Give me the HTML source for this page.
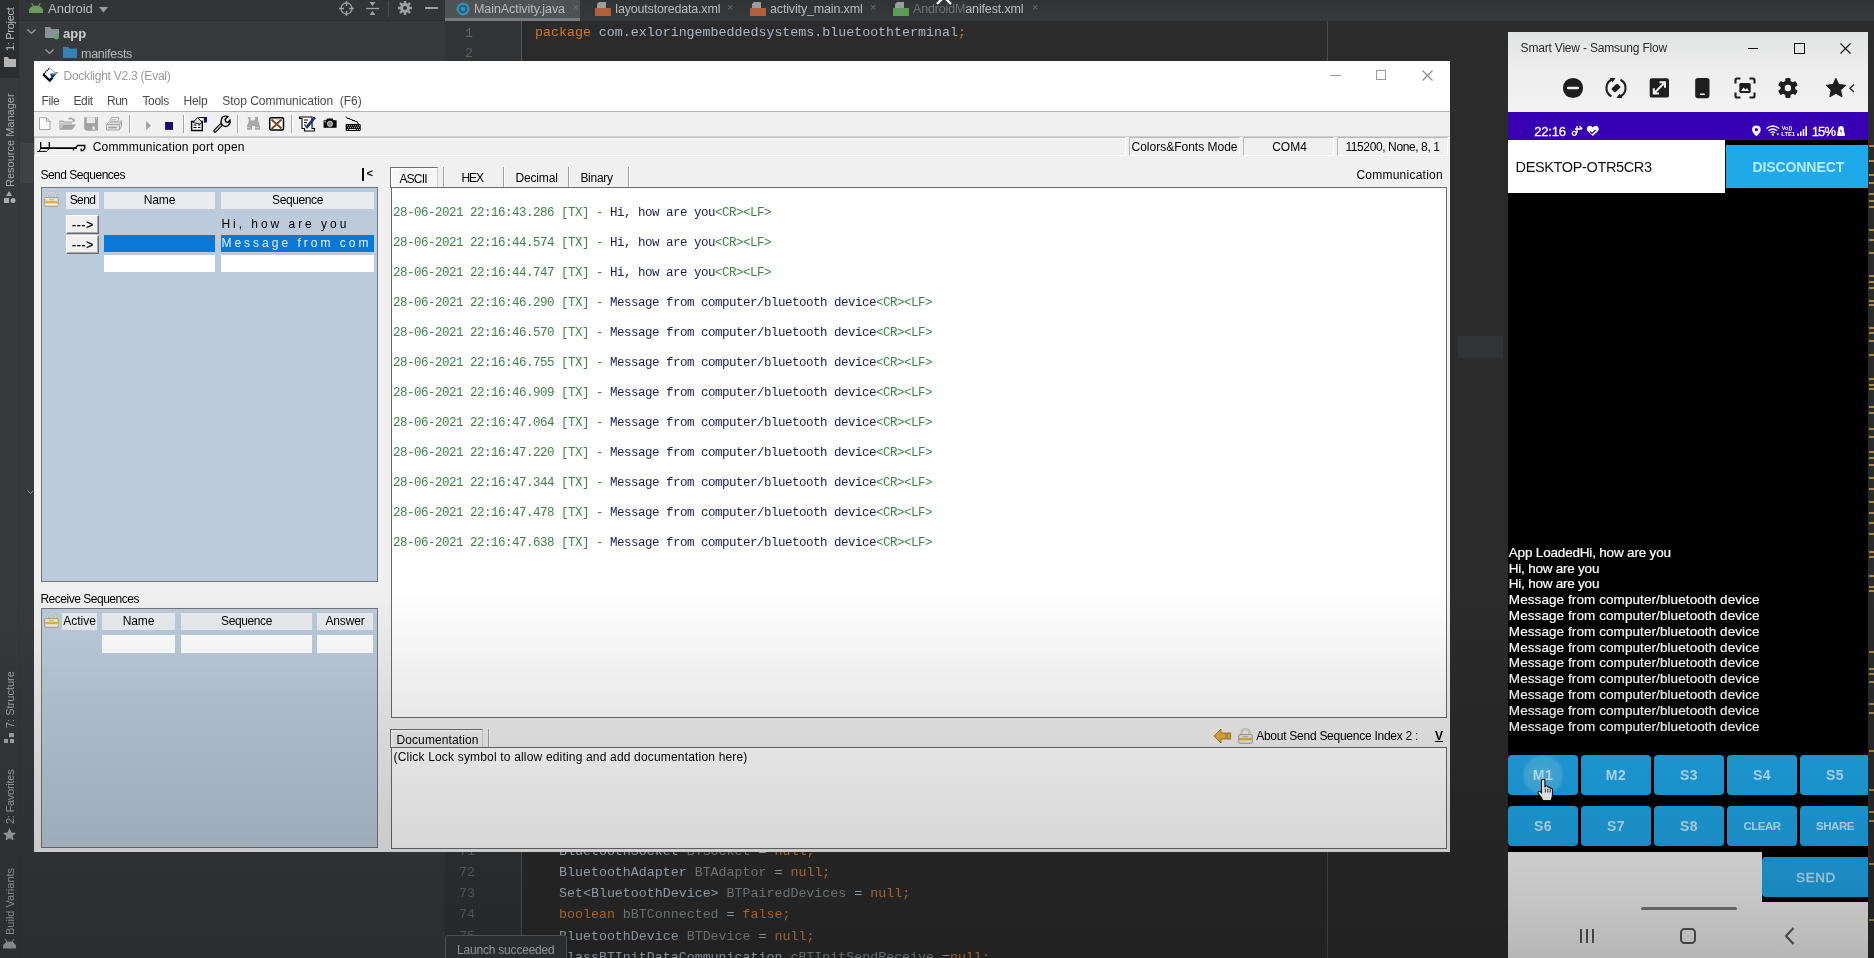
<!DOCTYPE html>
<html><head><meta charset="utf-8">
<style>
*{box-sizing:border-box;margin:0;padding:0}
html,body{width:1874px;height:958px;overflow:hidden;background:#2b2b2b;font-family:"Liberation Sans",sans-serif;}
.abs{position:absolute}
#root{position:relative;width:1874px;height:958px;overflow:hidden;background:#2b2b2b;filter:opacity(1)}
/* IDE */
#ide-strip{left:0;top:0;width:19px;height:958px;background:#37393b}
#ide-proj{left:19px;top:0;width:426px;height:958px;background:#38393c}
#ide-tabs{left:445px;top:0;width:1429px;height:21px;background:linear-gradient(#323335,#38393b)}
#ide-gutter{left:445px;top:21px;width:76px;height:937px;background:#313335}
.vt{position:absolute;transform-origin:0 0;transform:rotate(-90deg);white-space:nowrap;color:#bbbbbb;font-size:11px}
.code{font-family:"Liberation Mono",monospace;font-size:13.3px;color:#a9b7c6;white-space:pre}
.kw{color:#cc7832}
.fld{color:#84888b}
.ln{font-family:"Liberation Mono",monospace;font-size:13.3px;color:#606366}
/* Docklight */
#dock{left:34px;top:61px;width:1416px;height:791px;background:#f0f0f0;overflow:hidden}
.dl{font-size:12px;color:#000;white-space:nowrap}
.log{font-family:"Liberation Mono",monospace;font-size:12.5px;letter-spacing:-0.5px;white-space:pre;color:#3d8348;margin-top:1.4px}
.log b{font-weight:normal;color:#1c1c52}

.mn{color:#4a4a4a}
.sbox{top:137px;height:19px;font-size:12px;line-height:18px;text-align:center;white-space:nowrap;border-top:1px solid #b8b8b8;border-left:1px solid #b8b8b8;border-bottom:1px solid #fff;border-right:1px solid #fff;color:#000}
.hcell{height:17px;background:#e9ebef;font-size:12px;line-height:17px;text-align:center;color:#000;white-space:nowrap}
.sbtn{width:33px;height:18.5px;background:#f0f0f0;border:1px solid #fff;border-right-color:#6a6a6a;border-bottom-color:#6a6a6a;box-shadow:inset -1px -1px 0 #a8a8a8;font-size:12px;line-height:18px;text-align:center;color:#000;letter-spacing:0.7px;-webkit-text-stroke:0.3px #000;padding-left:1px}
.seq{font-size:12px;letter-spacing:2.97px;line-height:17px}
.tsep{top:167px;width:2px;height:20px;border-left:1px solid #a0a0a0;border-right:1px solid #fff}
/* phone */
#phone{left:1508px;top:32px;width:360px;height:926px;background:#000;overflow:hidden}
.pbtn{position:absolute;background:#1fa6e8;border-radius:4px;color:#bdeaff;font-weight:bold;font-size:14px;text-align:center;letter-spacing:0.5px}
.ptxt{position:absolute;left:0;color:#fff;font-size:13.5px;white-space:nowrap;-webkit-text-stroke:0.2px #fff}
</style></head><body>
<div id="root">
<!-- IDE BACKGROUND -->
<div class="abs" id="ide-strip"></div>
<div class="abs" id="ide-proj"></div>
<div class="abs" id="ide-tabs"></div>
<div class="abs" id="ide-gutter"></div>
<!--IDE-START-->
<!-- left strip -->
<div class="abs" style="left:0;top:0;width:19px;height:78px;background:#2b2d2e"></div>
<div class="vt" id="v1" style="left:3.5px;top:51px;letter-spacing:-0.3px">1: Project</div>
<svg class="abs" style="left:4px;top:56px" width="12" height="11" viewBox="0 0 12 11"><path d="M0 1h4l1 2h7v8H0z" fill="#b4b4b4"/></svg>
<div class="vt" id="v2" style="left:3.5px;top:187px;color:#a8a8a8">Resource Manager</div>
<svg class="abs" style="left:3px;top:191px" width="13" height="13" viewBox="0 0 13 13"><path d="M6 0l3 5H3z" fill="#aaa"/><rect x="1" y="7" width="5" height="5" fill="#aaa"/><circle cx="10" cy="9.5" r="2.5" fill="#aaa"/></svg>
<div class="abs" style="left:19px;top:0;width:1px;height:958px;background:#323537"></div><svg class="abs" style="left:27px;top:490px" width="7" height="5" viewBox="0 0 7 5"><path d="M.5.500l3 3 3-3" fill="none" stroke="#8a8c8e" stroke-width="1"/></svg>
<div class="vt" id="v3" style="left:3.5px;top:728px;color:#a8a8a8">7: Structure</div>
<svg class="abs" style="left:4px;top:733px" width="11" height="11" viewBox="0 0 11 11"><rect x="5" y="0" width="5" height="4" fill="#aaa"/><rect x="0" y="6" width="4" height="4" fill="#aaa"/><rect x="6" y="6" width="4" height="4" fill="#aaa"/></svg>
<div class="vt" id="v4" style="left:3.5px;top:824px;color:#a8a8a8;letter-spacing:-0.25px">2: Favorites</div>
<svg class="abs" style="left:3px;top:828px" width="13" height="13" viewBox="0 0 13 13"><path d="M6.5 0l2 4.5 4.5.5-3.4 3 1 4.6L6.500 10.200 2.400 12.600l1-4.600L0 5l4.500-.5z" fill="#aaa"/></svg>
<div class="vt" id="v5" style="left:3.5px;top:934.5px;color:#a8a8a8">Build Variants</div>
<svg class="abs" style="left:3px;top:939px" width="13" height="10" viewBox="0 0 13 10"><path d="M0 9c0-4 3-6 6.500-6S13 5 13 9zM2 0l2 3M11 0l-2 3" fill="#aaa" stroke="#aaa"/></svg>
<div class="abs" style="left:20px;top:143px;width:14px;height:40px;background:#3f4143"></div>
<!-- project header -->
<div class="abs" style="left:19px;top:0;width:426px;height:20px;background:#333437"></div><div class="abs" style="left:19px;top:20px;width:426px;height:1px;background:#2c2d2f"></div>
<svg class="abs" style="left:29px;top:3px" width="14" height="10" viewBox="0 0 14 10"><path d="M0 9.500c0-4 3-6.500 7-6.500s7 2.500 7 6.500zM2.500 0l2 3.200M11.500 0l-2 3.200" fill="#6a9c5f" stroke="#6a9c5f" stroke-width="1.200"/></svg>
<div class="abs" style="left:48px;top:1px;font-size:13px;color:#bbb">Android</div>
<svg class="abs" style="left:99px;top:7px" width="9" height="6" viewBox="0 0 9 6"><path d="M0 0h9L4.500 5.500z" fill="#9a9a9a"/></svg>
<svg class="abs" style="left:339px;top:1px" width="15" height="15" viewBox="0 0 15 15"><circle cx="7.500" cy="7.500" r="5.500" fill="none" stroke="#9fa1a3" stroke-width="1.300"/><path d="M7.500 0v5M7.500 10v5M0 7.500h5M10 7.500h5" stroke="#9fa1a3" stroke-width="1.300"/></svg>
<svg class="abs" style="left:366px;top:2px" width="13" height="13" viewBox="0 0 13 13"><path d="M0 6.500h13" stroke="#9fa1a3" stroke-width="1.300"/><path d="M3.500 0h6L6.500 4zM3.500 13h6L6.500 9z" fill="#9fa1a3"/></svg>
<div class="abs" style="left:388px;top:1px;width:1px;height:16px;background:#4b4d4f"></div>
<svg class="abs" style="left:398px;top:1px" width="14" height="14" viewBox="0 0 14 14"><circle cx="7" cy="7" r="3.600" fill="none" stroke="#9fa1a3" stroke-width="2.600"/><g stroke="#9fa1a3" stroke-width="2.400"><path d="M7 0v14M0 7h14M2 2l10 10M12 2L2 12"/></g><circle cx="7" cy="7" r="2" fill="#333437"/></svg>
<div class="abs" style="left:425px;top:7px;width:13px;height:2px;background:#9fa1a3"></div>
<!-- tree -->
<svg class="abs" style="left:27px;top:29px" width="9" height="6" viewBox="0 0 9 6"><path d="M.5.500l4 4 4-4" fill="none" stroke="#9fa1a3" stroke-width="1.200"/></svg>
<svg class="abs" style="left:45px;top:27px" width="15" height="13" viewBox="0 0 15 13"><path d="M0 0h5l1.500 2H14v9H0z" fill="#8c9196"/><circle cx="11.500" cy="10" r="2.500" fill="#59a869"/></svg>
<div class="abs" style="left:63px;top:26px;font-size:13px;color:#ccc;font-weight:bold">app</div>
<svg class="abs" style="left:45px;top:49px" width="9" height="6" viewBox="0 0 9 6"><path d="M.5.500l4 4 4-4" fill="none" stroke="#9fa1a3" stroke-width="1.200"/></svg>
<svg class="abs" style="left:63px;top:47px" width="15" height="12" viewBox="0 0 15 12"><path d="M0 0h5l1.500 1.500H14V11H0z" fill="#3682b2"/></svg>
<div class="abs" style="left:81px;top:47px;font-size:12.5px;color:#bbb;letter-spacing:-0.27px">manifests</div>
<!-- tabs -->
<div class="abs" style="left:445px;top:0;width:135px;height:20px;background:#4e5254"></div>
<div class="abs" style="left:445px;top:18px;width:135px;height:3px;background:#747a80"></div>
<svg class="abs" style="left:456px;top:2px" width="14" height="14" viewBox="0 0 14 14"><circle cx="7" cy="7" r="6.500" fill="#3a8db5"/><circle cx="7" cy="7" r="3.200" fill="none" stroke="#24566f" stroke-width="1.500"/></svg>
<div class="abs" style="left:474px;top:2px;font-size:12.5px;color:#bbb;letter-spacing:-0.07px">MainActivity.java</div>
<div class="abs" style="left:572.5px;top:1px;font-size:11px;color:#6e6e6e">×</div>
<svg class="abs" style="left:595px;top:2px" width="16" height="14" viewBox="0 0 16 14"><rect x="0" y="6" width="16" height="8" fill="#b0603a"/><path d="M4 0h7v6H2V2z" fill="#9a9da0"/></svg>
<div class="abs" style="left:615.3px;top:2px;font-size:12.5px;color:#bbb;letter-spacing:-0.18px">layoutstoredata.xml</div>
<div class="abs" style="left:727px;top:1px;font-size:11px;color:#6e6e6e">×</div>
<svg class="abs" style="left:750px;top:2px" width="16" height="14" viewBox="0 0 16 14"><rect x="0" y="6" width="16" height="8" fill="#b0603a"/><path d="M4 0h7v6H2V2z" fill="#9a9da0"/></svg>
<div class="abs" style="left:770px;top:2px;font-size:12.5px;color:#bbb;letter-spacing:-0.15px">activity_main.xml</div>
<div class="abs" style="left:870px;top:1px;font-size:11px;color:#6e6e6e">×</div>
<svg class="abs" style="left:893px;top:2px" width="16" height="14" viewBox="0 0 16 14"><rect x="0" y="6" width="16" height="8" fill="#5d9c57"/><path d="M4 0h7v6H2V2z" fill="#9a9da0"/></svg>
<div class="abs" style="left:913px;top:2px;font-size:12.5px;color:#bbb;letter-spacing:-0.15px"><span style="color:#6e7173">AndroidM</span>anifest.xml</div>
<div class="abs" style="left:1032px;top:1px;font-size:11px;color:#6e6e6e">×</div>
<svg class="abs" style="left:936px;top:-7px" width="16" height="12" viewBox="0 0 16 12"><path d="M1 11l7-7 7 7" fill="none" stroke="#fff" stroke-width="2.400"/></svg>
<!-- editor -->
<div class="abs" style="left:521px;top:21px;width:1px;height:937px;background:#555"></div>
<div class="abs" style="left:1327px;top:21px;width:1px;height:937px;background:#4a4a4a"></div>
<div class="abs" style="left:1458px;top:336px;width:45px;height:22px;background:#323334"></div>
<div class="abs ln" style="left:465px;top:25.5px">1</div>
<div class="abs ln" style="left:465px;top:46.2px">2</div>
<div class="abs code" style="left:535px;top:25px"><span class="kw">package</span> com.exloringembeddedsystems.bluetoothterminal<span class="kw">;</span></div>
<div class="abs ln" style="left:459px;top:843.8px">71</div>
<div class="abs code" style="left:559px;top:843.8px">BluetoothSocket <span class="fld">BTSocket</span> = <span class="kw">null;</span></div>
<div class="abs ln" style="left:459px;top:865px">72</div>
<div class="abs ln" style="left:459px;top:886.2px">73</div>
<div class="abs ln" style="left:459px;top:907.4px">74</div>
<div class="abs ln" style="left:459px;top:928.6px">75</div>
<div class="abs code" style="left:559px;top:865px">BluetoothAdapter <span class="fld">BTAdaptor</span> = <span class="kw">null;</span></div>
<div class="abs code" style="left:559px;top:886.2px">Set&lt;BluetoothDevice&gt; <span class="fld">BTPairedDevices</span> = <span class="kw">null;</span></div>
<div class="abs code" style="left:559px;top:907.4px"><span class="kw">boolean</span> <span class="fld">bBTConnected</span> = <span class="kw">false;</span></div>
<div class="abs code" style="left:559px;top:928.6px">BluetoothDevice <span class="fld">BTDevice</span> = <span class="kw">null;</span></div>
<div class="abs code" style="left:559px;top:949.8px">classBTInitDataCommunication <span class="fld">cBTInitSendReceive</span> =<span class="kw">null;</span></div>
<div class="abs" style="left:445px;top:935px;width:122px;height:26px;background:#35383a;border:1px solid #5e6163;border-radius:3px"></div>
<div class="abs" style="left:457px;top:943px;font-size:12px;color:#bbb;letter-spacing:-0.2px">Launch succeeded</div>
<!--IDE-END-->
<!-- DOCKLIGHT -->
<div class="abs" id="dock">
<!--DOCK-START-->
<div class="abs" style="left:-34px;top:-61px;width:1874px;height:958px">
<!-- title + menu -->
<div class="abs" style="left:34px;top:61px;width:1416px;height:50px;background:#fff"></div>
<svg class="abs" style="left:40.7px;top:64.7px" width="20" height="18" viewBox="40 64 20 18"><path d="M42.200 73.400L48.750 79.600 51.800 76.300" fill="none" stroke="#000" stroke-width="2.300" stroke-linejoin="miter"/><path d="M42.600 73L48.750 66.900" fill="none" stroke="#000" stroke-width="1.300" stroke-dasharray="1.400 .7"/><path d="M48.750 66.900L54.500 72" fill="none" stroke="#8a8a8a" stroke-width=".8"/><path d="M49 73.100L56.300 72.300 51 77.800z" fill="#1c6aa6"/><path d="M49.500 74.500l4.500-.5-2.500 2.600z" fill="#0c2c58"/><path d="M48.800 72.700L57.300 71.400" stroke="#9a9a9a" stroke-width=".9"/><path d="M54.500 71.900l2-.3" stroke="#c06820" stroke-width="1"/></svg>
<div class="abs dl" id="ttl" style="left:63.5px;top:69px;color:#9a9a9a;letter-spacing:-0.24px">Docklight V2.3 (Eval)</div>
<div class="abs" style="left:1330px;top:75px;width:11px;height:1px;background:#9a9a9a"></div>
<div class="abs" style="left:1376px;top:70px;width:10px;height:10px;border:1px solid #9a9a9a"></div>
<svg class="abs" style="left:1422px;top:70px" width="11" height="11" viewBox="0 0 11 11"><path d="M.5.500l10 10M10.500.500l-10 10" stroke="#8a8a8a" stroke-width="1.100"/></svg>
<div class="abs dl mn" style="left:41.5px;top:93.5px;letter-spacing:-0.4px">File</div>
<div class="abs dl mn" style="left:73.5px;top:93.5px;letter-spacing:-0.4px">Edit</div>
<div class="abs dl mn" style="left:107px;top:93.5px;letter-spacing:-0.5px">Run</div>
<div class="abs dl mn" style="left:142.4px;top:93.5px;letter-spacing:-0.3px">Tools</div>
<div class="abs dl mn" style="left:183.4px;top:93.5px;letter-spacing:-0.15px">Help</div>
<div class="abs dl mn" id="stopc" style="left:222.3px;top:93.5px;letter-spacing:-0.03px">Stop Communication&nbsp;&nbsp;(F6)</div>
<div class="abs" style="left:34px;top:111px;width:1416px;height:1px;background:#b4b4b4"></div>
<!-- toolbar -->
<div class="abs" style="left:34px;top:112px;width:1416px;height:24px;background:#f0f0f0"></div>
<svg class="abs" style="left:34px;top:112px" width="340" height="25" viewBox="34 112 340 25">
<!-- new -->
<path d="M39.500 117.800h7l3.500 3.500v8.200h-10.500z" fill="#fdfdfd" stroke="#a6a6a6" stroke-width="1"/><path d="M46.500 117.800v3.500h3.500" fill="none" stroke="#a6a6a6" stroke-width="1"/>
<!-- open -->
<path d="M60 129.700v-8.500h3l1 1h7v2.300" fill="none" stroke="#a6a6a6" stroke-width="1.200"/><path d="M60 129.700l3.500-5.200h12.500l-4 5.200z" fill="#a2a2a2"/><path d="M61 122.500h9v2h-6.500l-2.500 3.500z" fill="#c4c4c4"/><path d="M68 118.500q3.500-2.500 6 1l1-1.300v3.600h-3.400l1.200-1.300q-1.800-2.200-4-.8z" fill="#a6a6a6"/>
<!-- save -->
<path d="M84.200 117.300h13.800v13.300h-12.300l-1.500-1.500z" fill="#a2a2a2"/><rect x="86.700" y="117.300" width="8.300" height="5.800" fill="#e8e8e8"/><rect x="87.200" y="125.300" width="8" height="5.300" fill="#a2a2a2"/><rect x="92.500" y="126.300" width="2.200" height="3.600" fill="#ececec"/><rect x="96" y="118.200" width="1" height="1" fill="#e8e8e8"/>
<!-- print -->
<path d="M109.500 122l2-4.500h7.500l-1.500 4.500z" fill="#f4f4f4" stroke="#a6a6a6" stroke-width="1"/><path d="M111.500 119.500h5M111 121h5" stroke="#b8b8b8" stroke-width=".8"/><path d="M106.500 124.500l2.500-2.500h10.500l2-1.500v6l-2.500 3.500h-12.500z" fill="#e2e2e2" stroke="#a6a6a6" stroke-width="1"/><path d="M106.500 124.500h13v5.500M119.500 124.500l2-2.500" fill="none" stroke="#a6a6a6" stroke-width="1"/><path d="M108.500 127.500h8" stroke="#a0a0a0" stroke-width="1.600"/>
<!-- seps -->
<g stroke="#a8a8a8" stroke-width="1"><path d="M129.500 115v18M183.500 115v18M237.500 115v18M291.500 115v18"/></g>
<g stroke="#fff" stroke-width="1"><path d="M130.500 115v18M184.500 115v18M238.500 115v18M292.500 115v18"/></g>
<!-- play / stop -->
<path d="M146 121v9l5-4.500z" fill="#a4a4a4"/>
<rect x="165.100" y="122" width="7.900" height="7.900" fill="#1c0a72"/>
<!-- props -->
<path d="M191.600 121.500h10.700v9h-10.700z" fill="#fff" stroke="#000" stroke-width="1.400"/><path d="M193.500 125h3M198 125h2.500M193.500 127.500h3M198 127.500h2.500" stroke="#000" stroke-width="1.200"/><path d="M193 122.500l4.500-5 4.500 4.500-2 2.200z" fill="#d8d8d8" stroke="#000" stroke-width=".9"/><path d="M198.500 117.500h6v5" fill="none" stroke="#000" stroke-width="1.200"/><rect x="204" y="117" width="3" height="5.500" fill="#14146a"/>
<!-- wrench -->
<path d="M215 131l8-8" stroke="#000" stroke-width="3.400" stroke-linecap="round"/><path d="M215.300 130.700l7.700-7.700" stroke="#c8c8c8" stroke-width="1.400" stroke-linecap="round"/><path d="M222 117.500q2.500-2 6-1l-3 3 .8 2.200 2.200.8 2-2.500q.8 3.500-1.800 5.500t-5.500 0q-2.600-2.600-1.200-6z" fill="#e8e8e8" stroke="#000" stroke-width="1.300"/>
<!-- binoculars -->
<path d="M247.500 117h3v2.500l1 1h2.500l1-1V117h3v3l2 6v3.700h-5V126h-3v3.700h-5V126l2-6z" fill="#a8a8a8"/><path d="M246.500 127.500h3M255.500 127.500h3" stroke="#d0d0d0" stroke-width="1"/>
<!-- xbox -->
<rect x="269.700" y="117.700" width="13.800" height="12.400" rx="1.500" fill="#fafafa" stroke="#000" stroke-width="1.500"/><path d="M271.500 119.500l10 9M281.500 119.500l-10 9.500" stroke="#7a4424" stroke-width="1.800"/><path d="M276 119h5" stroke="#999" stroke-width="1"/>
<!-- notepad -->
<path d="M299.500 117h3l0 0h9.500v11.500h2.500v2.500h-10v-2.500h-2.500v-10h-2.500z" fill="#fafafa" stroke="#000" stroke-width="1.100"/><path d="M304 120h4M304 122.500h3M304 125h2" stroke="#000" stroke-width="1"/><path d="M305.500 127l8.500-10 1.300 1.200-8 10z" fill="#1a3a9a" stroke="#0a1a5a" stroke-width=".8"/><path d="M304.500 128.500l1-1.500 1.300 1.200z" fill="#d8c030"/>
<!-- camera -->
<path d="M323.600 120.200h2.500l1-1.700h5.500l1 1.700h3v7.600h-13z" fill="#000"/><circle cx="330" cy="123.800" r="2.600" fill="#8a8a8a" stroke="#d8d8d8" stroke-width=".9"/><rect x="324.500" y="121.200" width="1.600" height="1.200" fill="#ccc"/>
<!-- keyboard -->
<path d="M346 116.500l2 2.500 1-1 1.500 2 1-1 1.500 2 1-1 1.500 2 1-1 2 3" fill="none" stroke="#000" stroke-width="1"/><rect x="345.700" y="124" width="15" height="7" rx="1" fill="#000"/><g fill="#d8d8d8"><rect x="347" y="125.300" width="1" height="1"/><rect x="349" y="125.300" width="1" height="1"/><rect x="351" y="125.300" width="1" height="1"/><rect x="353" y="125.300" width="1" height="1"/><rect x="355" y="125.300" width="1" height="1"/><rect x="357" y="125.300" width="1" height="1"/><rect x="359" y="125.300" width="1" height="1"/><rect x="348" y="127.200" width="1" height="1"/><rect x="350" y="127.200" width="1" height="1"/><rect x="352" y="127.200" width="1" height="1"/><rect x="354" y="127.200" width="1" height="1"/><rect x="356" y="127.200" width="1" height="1"/><rect x="358" y="127.200" width="1" height="1"/><rect x="347" y="129" width="1" height="1"/><rect x="349" y="129" width="7" height="1"/><rect x="357" y="129" width="1" height="1"/><rect x="359" y="129" width="1" height="1"/></g>
</svg>

<div class="abs" style="left:34px;top:136px;width:1416px;height:1px;background:#d0d0d0"></div>
<div class="abs" style="left:34px;top:137px;width:1416px;height:1px;background:#fff"></div>
<!-- status -->
<div class="abs" style="left:34px;top:137px;width:1092px;height:19px;border-top:1px solid #c8c8c8;border-left:1px solid #c8c8c8;border-bottom:1px solid #fff;border-right:1px solid #fff"></div>
<svg class="abs" style="left:36px;top:140px" width="52" height="14" viewBox="36 140 52 14"><g fill="none" stroke="#000"><path d="M40.700 142v6.200h8.600V142" stroke-width="1.300"/><path d="M40 148.200h37" stroke-width="1.800"/><path d="M37.200 151.400h9.600M40.500 149l-1.500 2.400M48.500 149l-1 1.500" stroke-width="1"/><path d="M75.500 148l2-2.500h7.300v2.700l-2 2.500h-1.600v-2.200M73.500 148.200v2.300" stroke-width="1.300"/></g></svg>
<div class="abs dl" id="cpo" style="left:92.7px;top:140px;letter-spacing:0.19px">Commmunication port open</div>
<div class="abs sbox" style="left:1129px;width:111px">Colors&amp;Fonts Mode</div>
<div class="abs sbox" style="left:1243px;width:91px;padding-left:2px">COM4</div>
<div class="abs sbox" style="left:1337px;width:111px;letter-spacing:-0.39px">115200, None, 8, 1</div>
<!-- send sequences -->
<div class="abs dl" style="left:40.4px;top:168px;letter-spacing:-0.48px">Send Sequences</div>
<div class="abs" style="left:362px;top:168px;width:1.5px;height:13px;background:#000"></div>
<div class="abs dl" style="left:366.5px;top:167px;font-size:11px;font-weight:bold">&lt;</div>
<div class="abs" style="left:41px;top:187px;width:337px;height:395px;background:#bccbdc;border:1px solid #767676"></div>
<svg class="abs" style="left:43.5px;top:191px" width="15" height="16" viewBox="0 0 15 16"><path d="M3.500 7V4.500q0-3.300 4-3.300t4 3.300V7" fill="none" stroke="#b8b8b8" stroke-width="2"/><path d="M3.500 7V4.500q0-3.300 4-3.300t4 3.300V7" fill="none" stroke="#e8e8e8" stroke-width=".8"/><rect x=".7" y="6.500" width="13.600" height="8.800" rx="1" fill="#e4e2dc" stroke="#a89a78" stroke-width=".9"/><rect x="1.200" y="10" width="12.600" height="2.300" fill="#e8ae3a"/><rect x="1.200" y="12.800" width="12.600" height="1.200" fill="#f4f0e6"/><path d="M5 8.700h5" stroke="#b0b0b0" stroke-width="1"/></svg>

<div class="abs hcell" style="left:66px;top:192px;width:33px;letter-spacing:-0.6px">Send</div>
<div class="abs hcell" style="left:104px;top:192px;width:111px;letter-spacing:-0.1px">Name</div>
<div class="abs hcell" style="left:221px;top:192px;width:153px;letter-spacing:-0.4px">Sequence</div>
<div class="abs sbtn" style="left:66px;top:215px">---&gt;</div>
<div class="abs sbtn" style="left:66px;top:235px">---&gt;</div>
<div class="abs dl seq" style="left:221.4px;top:215.5px;color:#000">Hi, how are you</div>
<div class="abs" style="left:104px;top:235px;width:111px;height:17px;background:#0a78d7"></div>
<div class="abs" style="left:221px;top:235px;width:153px;height:17px;background:#0a78d7;overflow:hidden"><div class="dl seq" style="color:#e8f4ff;margin-top:0px;margin-left:0.4px;letter-spacing:3.0px">Message from com</div></div>
<div class="abs" style="left:104px;top:255px;width:111px;height:17px;background:#fff"></div>
<div class="abs" style="left:221px;top:255px;width:153px;height:17px;background:#fff"></div>
<!-- receive sequences -->
<div class="abs dl" style="left:40.4px;top:592px;letter-spacing:-0.48px">Receive Sequences</div>
<div class="abs" style="left:41px;top:608px;width:337px;height:240px;background:#bccbdc;border:1px solid #767676"></div>
<svg class="abs" style="left:43.5px;top:612px" width="15" height="16" viewBox="0 0 15 16"><path d="M3.500 7V4.500q0-3.300 4-3.300t4 3.300V7" fill="none" stroke="#b8b8b8" stroke-width="2"/><path d="M3.500 7V4.500q0-3.300 4-3.300t4 3.300V7" fill="none" stroke="#e8e8e8" stroke-width=".8"/><rect x=".7" y="6.500" width="13.600" height="8.800" rx="1" fill="#e4e2dc" stroke="#a89a78" stroke-width=".9"/><rect x="1.200" y="10" width="12.600" height="2.300" fill="#e8ae3a"/><rect x="1.200" y="12.800" width="12.600" height="1.200" fill="#f4f0e6"/><path d="M5 8.700h5" stroke="#b0b0b0" stroke-width="1"/></svg>

<div class="abs hcell" style="left:62px;top:612.7px;width:35px">Active</div>
<div class="abs hcell" style="left:102px;top:612.7px;width:73px;letter-spacing:-0.1px">Name</div>
<div class="abs hcell" style="left:181px;top:612.7px;width:131px;letter-spacing:-0.4px">Sequence</div>
<div class="abs hcell" style="left:317px;top:612.7px;width:56px;letter-spacing:-0.15px">Answer</div>
<div class="abs" style="left:102px;top:635px;width:73px;height:18px;background:#fff"></div>
<div class="abs" style="left:181px;top:635px;width:131px;height:18px;background:#fff"></div>
<div class="abs" style="left:317px;top:635px;width:56px;height:18px;background:#fff"></div>
<!-- tabs -->
<div class="abs" style="left:389.5px;top:167px;width:48.5px;height:21px;background:#f6f6f6;border-top:1.5px solid #707070;border-left:1.5px solid #707070;border-right:1px solid #d0d0d0;box-shadow:inset 1.5px 1.5px 0 #fff,inset -1px 0 0 #fafafa"></div>
<div class="abs dl" style="left:399.4px;top:171.5px;letter-spacing:-0.8px">ASCII</div>
<div class="abs dl" style="left:461.4px;top:170.5px;letter-spacing:-1px">HEX</div>
<div class="abs dl" style="left:515.5px;top:170.5px;letter-spacing:-0.16px">Decimal</div>
<div class="abs dl" style="left:580.4px;top:170.5px;letter-spacing:-0.27px">Binary</div>
<div class="abs tsep" style="left:442.5px"></div>
<div class="abs tsep" style="left:503px"></div>
<div class="abs tsep" style="left:568px"></div>
<div class="abs tsep" style="left:628px"></div>
<div class="abs dl" id="commlbl" style="left:1356.4px;top:168px;letter-spacing:0.24px">Communication</div>
<!-- comm box -->
<div class="abs" style="left:391px;top:187px;width:1056px;height:531px;background:#fff;border:1px solid #6a6a6a"></div>
<div class="abs log" style="left:393px;top:205px">28-06-2021 22:16:43.286 [TX] - <b>Hi, how are you</b>&lt;CR&gt;&lt;LF&gt;</div>
<div class="abs log" style="left:393px;top:235px">28-06-2021 22:16:44.574 [TX] - <b>Hi, how are you</b>&lt;CR&gt;&lt;LF&gt;</div>
<div class="abs log" style="left:393px;top:265px">28-06-2021 22:16:44.747 [TX] - <b>Hi, how are you</b>&lt;CR&gt;&lt;LF&gt;</div>
<div class="abs log" style="left:393px;top:295px">28-06-2021 22:16:46.290 [TX] - <b>Message from computer/bluetooth device</b>&lt;CR&gt;&lt;LF&gt;</div>
<div class="abs log" style="left:393px;top:325px">28-06-2021 22:16:46.570 [TX] - <b>Message from computer/bluetooth device</b>&lt;CR&gt;&lt;LF&gt;</div>
<div class="abs log" style="left:393px;top:355px">28-06-2021 22:16:46.755 [TX] - <b>Message from computer/bluetooth device</b>&lt;CR&gt;&lt;LF&gt;</div>
<div class="abs log" style="left:393px;top:385px">28-06-2021 22:16:46.909 [TX] - <b>Message from computer/bluetooth device</b>&lt;CR&gt;&lt;LF&gt;</div>
<div class="abs log" style="left:393px;top:415px">28-06-2021 22:16:47.064 [TX] - <b>Message from computer/bluetooth device</b>&lt;CR&gt;&lt;LF&gt;</div>
<div class="abs log" style="left:393px;top:445px">28-06-2021 22:16:47.220 [TX] - <b>Message from computer/bluetooth device</b>&lt;CR&gt;&lt;LF&gt;</div>
<div class="abs log" style="left:393px;top:475px">28-06-2021 22:16:47.344 [TX] - <b>Message from computer/bluetooth device</b>&lt;CR&gt;&lt;LF&gt;</div>
<div class="abs log" style="left:393px;top:505px">28-06-2021 22:16:47.478 [TX] - <b>Message from computer/bluetooth device</b>&lt;CR&gt;&lt;LF&gt;</div>
<div class="abs log" style="left:393px;top:535px">28-06-2021 22:16:47.638 [TX] - <b>Message from computer/bluetooth device</b>&lt;CR&gt;&lt;LF&gt;</div>

<!-- doc -->
<div class="abs" style="left:389.5px;top:728.5px;width:93.5px;height:19.5px;border-top:1.5px solid #707070;border-left:1.5px solid #707070;border-right:1px solid #d0d0d0;box-shadow:inset 1.5px 1.5px 0 #fff"></div>
<div class="abs tsep" style="left:487.5px;top:729px;height:18px"></div>
<div class="abs dl" id="doclbl" style="left:396.4px;top:733px;letter-spacing:0.12px">Documentation</div>
<svg class="abs" style="left:1213px;top:728px" width="19" height="16" viewBox="0 0 19 16"><path d="M1 8l7-7v4h5v6H8v4z" fill="#e0b040" stroke="#a87c20" stroke-width="1"/><rect x="14" y="5" width="3.500" height="6" fill="#e0b040" stroke="#a87c20" stroke-width="1"/></svg>
<svg class="abs" style="left:1237.5px;top:727.8px" width="15" height="16" viewBox="0 0 15 16"><path d="M3.500 7V4.500q0-3.300 4-3.300t4 3.300V7" fill="none" stroke="#b8b8b8" stroke-width="2"/><path d="M3.500 7V4.500q0-3.300 4-3.300t4 3.300V7" fill="none" stroke="#e8e8e8" stroke-width=".8"/><rect x=".7" y="6.500" width="13.600" height="8.800" rx="1" fill="#e4e2dc" stroke="#a89a78" stroke-width=".9"/><rect x="1.200" y="10" width="12.600" height="2.300" fill="#e8ae3a"/><rect x="1.200" y="12.800" width="12.600" height="1.200" fill="#f4f0e6"/><path d="M5 8.700h5" stroke="#b0b0b0" stroke-width="1"/></svg>

<div class="abs dl" id="about" style="left:1256.2px;top:729px;letter-spacing:-0.26px">About Send Sequence Index 2 :</div>
<div class="abs dl" style="left:1435px;top:729px;font-weight:bold;text-decoration:underline">V</div>
<div class="abs" style="left:391px;top:747px;width:1056px;height:102px;background:#fff;border:1px solid #6a6a6a"></div>
<div class="abs dl" id="clk" style="left:393.6px;top:750px;letter-spacing:0.176px">(Click Lock symbol to allow editing and add documentation here)</div>
</div>
<!--DOCK-END-->
</div>
<!-- PHONE -->
<div class="abs" id="phone">
<!--PHONE-START-->
<div class="abs" style="left:-1508px;top:-32px;width:1874px;height:958px">
<div class="abs" style="left:1508px;top:32px;width:360px;height:80px;background:linear-gradient(#e2e3e3,#eeeeee 50%,#f2f2f2)"></div>
<div class="abs" id="svt" style="left:1520.6px;top:41px;font-size:12px;color:#2a2a2a;white-space:nowrap;letter-spacing:-0.19px">Smart View - Samsung Flow</div>
<div class="abs" style="left:1748px;top:48px;width:10px;height:1px;background:#111"></div>
<div class="abs" style="left:1794px;top:43px;width:11px;height:11px;border:1px solid #111"></div>
<svg class="abs" style="left:1840px;top:43px" width="11" height="11" viewBox="0 0 11 11"><path d="M.5.500l10 10M10.500.500l-10 10" stroke="#111" stroke-width="1.100"/></svg>
<svg class="abs" style="left:1556px;top:72px" width="304" height="32" viewBox="1556 72 304 32">
<!-- minus circle -->
<circle cx="1573" cy="88" r="10.100" fill="#1e1e1e"/><rect x="1567" y="86.800" width="12" height="2.400" rx="1" fill="#f0f0f0"/>
<!-- rotate -->
<path d="M1612.500 79.300a9.300 9.300 0 0 0-1 17M1619.500 96.700a9.300 9.300 0 0 0 1-17" fill="none" stroke="#1e1e1e" stroke-width="2.100"/><path d="M1609.500 78l6 0-3 4.500z" fill="#1e1e1e"/><path d="M1622.500 98l-6 0 3-4.500z" fill="#1e1e1e"/><rect x="1611.800" y="85.300" width="8.400" height="5.400" rx="1.300" transform="rotate(-42 1616 88)" fill="#1e1e1e"/>
<!-- expand -->
<rect x="1649.700" y="78.300" width="19.300" height="19.300" rx="2.200" fill="#1e1e1e"/><path d="M1654 93.300l10.600-10.600M1659.500 82.300h5.500v5.500M1653.800 88.300v5.300h5.300" fill="none" stroke="#f0f0f0" stroke-width="2"/>
<!-- phone -->
<rect x="1695.200" y="78" width="14.300" height="20.200" rx="2.600" fill="#1e1e1e"/><rect x="1700" y="93.500" width="4.800" height="1.500" fill="#f0f0f0"/>
<!-- screenshot -->
<path d="M1735.500 83.500v-3.500q0-1.500 1.500-1.500h3.500M1749.500 78.500h3.500q1.500 0 1.500 1.500v3.500M1754.500 92.500v3.500q0 1.500-1.500 1.500h-3.500M1740.500 97.500h-3.500q-1.500 0-1.500-1.500v-3.500" fill="none" stroke="#1e1e1e" stroke-width="2.100"/><rect x="1739.300" y="83" width="11.400" height="10" rx="1.500" fill="#1e1e1e"/><path d="M1741 91l2.500-3.500 2 2 1.500-1.500 2 3z" fill="#f0f0f0"/>
<!-- gear -->
<g transform="translate(1787.900 88)"><g fill="#1e1e1e"><rect x="-2.600" y="-10" width="5.200" height="20" rx="1.300"/><rect x="-2.600" y="-10" width="5.200" height="20" rx="1.300" transform="rotate(60)"/><rect x="-2.600" y="-10" width="5.200" height="20" rx="1.300" transform="rotate(120)"/><circle r="7.400"/></g><circle r="3.200" fill="#f0f0f0"/></g>
<!-- star -->
<path d="M1835.900 78.300l2.900 6.200 6.900.8-5.100 4.700 1.400 6.800-6.100-3.400-6.100 3.400 1.400-6.800-5.100-4.700 6.900-.8z" fill="#1e1e1e" stroke="#1e1e1e" stroke-width="1" stroke-linejoin="round"/>
<path d="M1854 84.500l-4 3.700 4 3.700" fill="none" stroke="#1e1e1e" stroke-width="1.300"/>
</svg>

<!-- status bar -->
<div class="abs" style="left:1508px;top:112px;width:360px;height:28px;background:#3700b3"></div>
<div class="abs" style="left:1534.3px;top:123.5px;font-size:13px;color:#fff;white-space:nowrap;letter-spacing:-0.2px;-webkit-text-stroke:0.3px #fff">22:16</div>
<svg class="abs" style="left:1570px;top:124px" width="280" height="14" viewBox="1570 124 280 14">
<!-- transfer icon -->
<path d="M1575 129h6.500M1579.500 126.300l2.700 2.700" fill="none" stroke="#fff" stroke-width="1.500"/><path d="M1577 126v7" stroke="#fff" stroke-width="1.400"/><circle cx="1574.300" cy="133.300" r="2" fill="none" stroke="#fff" stroke-width="1.300"/>
<!-- heart -->
<path d="M1592.800 136l-5.300-5q-1.600-2 0-4t4.200-.6l1.100 1 1.100-1q2.600-1.400 4.200.6t0 4z" fill="#fff"/><path d="M1590 131.500l2 2 3.500-3.500" fill="none" stroke="#3700b3" stroke-width="1.200"/>
<!-- pin -->
<path d="M1756.400 125.500q4.300 0 4.300 4.200 0 2.800-4.300 6.500-4.300-3.700-4.300-6.500 0-4.200 4.300-4.200z" fill="#fff"/><circle cx="1756.400" cy="129.700" r="1.600" fill="#3700b3"/>
<!-- wifi -->
<path d="M1766.500 128.500q6.300-5 12.600 0M1768.500 130.700q4.300-3.400 8.600 0M1770.500 132.800q2.300-1.800 4.600 0" fill="none" stroke="#fff" stroke-width="1.300"/><circle cx="1772.800" cy="134.700" r="1.100" fill="#fff"/><path d="M1776.500 133.500l1.300 2 1.300-2z" fill="#fff"/>
<!-- VoLTE -->
<text x="1781.800" y="130" font-family="Liberation Sans" font-size="5.500" font-weight="bold" fill="#fff">Vo))</text><text x="1781.300" y="136" font-family="Liberation Sans" font-size="5.800" font-weight="bold" fill="#fff">LTE1</text>
<!-- signal -->
<rect x="1797.300" y="133.500" width="1.600" height="2.500" fill="#fff"/><rect x="1800" y="131.500" width="1.600" height="4.500" fill="#fff"/><rect x="1802.700" y="129" width="1.600" height="7" fill="#fff"/><rect x="1805.400" y="126.300" width="1.600" height="9.700" fill="#fff"/>
<!-- battery -->
<path d="M1839.500 126h3v1.200h1.300v2.300l1 4.500v2h-7.600v-2l1-4.500v-2.300h1.300z" fill="#fff"/><path d="M1841 129l-1.200 2.500h1.300l-.5 2 1.600-2.700h-1.300z" fill="#3700b3"/>
</svg>

<div class="abs" style="left:1811.7px;top:123.5px;font-size:13px;color:#fff;white-space:nowrap;letter-spacing:-0.8px;-webkit-text-stroke:0.3px #fff">15%</div>
<!-- device -->
<div class="abs" style="left:1508px;top:140px;width:217px;height:53px;background:#fff"></div>
<div class="abs" id="dsk" style="left:1515.6px;top:158.5px;font-size:14.5px;color:#111;white-space:nowrap;letter-spacing:-0.37px">DESKTOP-OTR5CR3</div>
<div class="abs" style="left:1726px;top:145px;width:142px;height:43px;background:#1fa9e9"></div>
<div class="abs" id="disc" style="left:1752.4px;top:159px;font-size:14px;font-weight:bold;color:#b8ecff;letter-spacing:-0.08px;white-space:nowrap">DISCONNECT</div>
<div class="ptxt" style="left:1508.8px;top:544.7px;letter-spacing:-0.184px">App LoadedHi, how are you</div>
<div class="ptxt" style="left:1508.8px;top:560.5px;letter-spacing:-0.227px">Hi, how are you</div>
<div class="ptxt" style="left:1508.8px;top:576.3px;letter-spacing:-0.227px">Hi, how are you</div>
<div class="ptxt" style="left:1508.8px;top:592.1px;letter-spacing:0.084px">Message from computer/bluetooth device</div>
<div class="ptxt" style="left:1508.8px;top:607.9px;letter-spacing:0.084px">Message from computer/bluetooth device</div>
<div class="ptxt" style="left:1508.8px;top:623.7px;letter-spacing:0.084px">Message from computer/bluetooth device</div>
<div class="ptxt" style="left:1508.8px;top:639.5px;letter-spacing:0.084px">Message from computer/bluetooth device</div>
<div class="ptxt" style="left:1508.8px;top:655.3px;letter-spacing:0.084px">Message from computer/bluetooth device</div>
<div class="ptxt" style="left:1508.8px;top:671.1px;letter-spacing:0.084px">Message from computer/bluetooth device</div>
<div class="ptxt" style="left:1508.8px;top:686.9px;letter-spacing:0.084px">Message from computer/bluetooth device</div>
<div class="ptxt" style="left:1508.8px;top:702.7px;letter-spacing:0.084px">Message from computer/bluetooth device</div>
<div class="ptxt" style="left:1508.8px;top:718.5px;letter-spacing:0.084px">Message from computer/bluetooth device</div>

<!-- buttons -->
<div class="pbtn" style="left:1508px;top:755px;width:70px;height:40px;line-height:40px">M1</div>
<div class="pbtn" style="left:1581px;top:755px;width:70px;height:40px;line-height:40px">M2</div>
<div class="pbtn" style="left:1654px;top:755px;width:70px;height:40px;line-height:40px">S3</div>
<div class="pbtn" style="left:1727px;top:755px;width:70px;height:40px;line-height:40px">S4</div>
<div class="pbtn" style="left:1800px;top:755px;width:70px;height:40px;line-height:40px">S5</div>
<div class="pbtn" style="left:1508px;top:806px;width:70px;height:40px;line-height:40px;">S6</div>
<div class="pbtn" style="left:1581px;top:806px;width:70px;height:40px;line-height:40px;">S7</div>
<div class="pbtn" style="left:1654px;top:806px;width:70px;height:40px;line-height:40px;">S8</div>
<div class="pbtn" style="left:1727px;top:806px;width:70px;height:40px;line-height:40px;font-size:11.5px;letter-spacing:-0.5px;">CLEAR</div>
<div class="pbtn" style="left:1800px;top:806px;width:70px;height:40px;line-height:40px;font-size:11.5px;letter-spacing:-0.5px;">SHARE</div>
<div class="pbtn" style="left:1762px;top:857px;width:108px;height:40px;line-height:41px;letter-spacing:0.6px;font-size:13.5px;font-weight:normal;-webkit-text-stroke:0.35px #bdeaff">SEND</div>

<div class="abs" style="left:1508px;top:852px;width:254px;height:50px;background:#f2f2f2"></div>
<div class="abs" style="left:1508px;top:902px;width:360px;height:56px;background:linear-gradient(#f2f2f2,#e8e8e8)"></div>
<div class="abs" style="left:1641px;top:907px;width:96px;height:3px;border-radius:2px;background:#7a7a7a"></div>
<div class="abs" style="left:1580px;top:929px;width:2px;height:14px;background:#555;box-shadow:6px 0 0 #555,12px 0 0 #555"></div>
<div class="abs" style="left:1680px;top:928px;width:16px;height:16px;border:2px solid #555;border-radius:4.5px"></div>
<svg class="abs" style="left:1784px;top:927px" width="11" height="18" viewBox="0 0 11 18"><path d="M9.500 1L2 9l7.500 8" fill="none" stroke="#555" stroke-width="2"/></svg>
</div>
<!--PHONE-END-->
</div>
<div class="abs" style="left:1868px;top:21px;width:6px;height:937px;background:#2b2b2b"></div>
<div class="abs" style="left:1869px;top:145.4px;width:5px;height:2px;background:#a88a48"></div><div class="abs" style="left:1869px;top:160.1px;width:5px;height:2px;background:#a88a48"></div><div class="abs" style="left:1869px;top:174.4px;width:5px;height:2px;background:#a88a48"></div><div class="abs" style="left:1869px;top:181.7px;width:5px;height:2px;background:#a88a48"></div><div class="abs" style="left:1869px;top:193.0px;width:5px;height:2px;background:#a88a48"></div><div class="abs" style="left:1869px;top:200.3px;width:5px;height:2px;background:#a88a48"></div><div class="abs" style="left:1869px;top:205.9px;width:5px;height:2px;background:#a88a48"></div><div class="abs" style="left:1869px;top:229.3px;width:5px;height:2px;background:#a88a48"></div><div class="abs" style="left:1869px;top:239.2px;width:5px;height:2px;background:#a88a48"></div><div class="abs" style="left:1869px;top:252.2px;width:5px;height:2px;background:#a88a48"></div><div class="abs" style="left:1869px;top:275.1px;width:5px;height:2px;background:#a88a48"></div><div class="abs" style="left:1869px;top:281.1px;width:5px;height:2px;background:#a88a48"></div><div class="abs" style="left:1869px;top:286.7px;width:5px;height:2px;background:#a88a48"></div><div class="abs" style="left:1869px;top:299.7px;width:5px;height:2px;background:#a88a48"></div><div class="abs" style="left:1869px;top:304.0px;width:5px;height:2px;background:#a88a48"></div><div class="abs" style="left:1869px;top:326.9px;width:5px;height:2px;background:#a88a48"></div><div class="abs" style="left:1869px;top:332.1px;width:5px;height:2px;background:#a88a48"></div><div class="abs" style="left:1869px;top:339.9px;width:5px;height:2px;background:#a88a48"></div><div class="abs" style="left:1869px;top:353.7px;width:5px;height:2px;background:#a88a48"></div><div class="abs" style="left:1869px;top:377.5px;width:5px;height:2px;background:#a88a48"></div><div class="abs" style="left:1869px;top:384.0px;width:5px;height:2px;background:#a88a48"></div><div class="abs" style="left:1869px;top:388.3px;width:5px;height:2px;background:#a88a48"></div><div class="abs" style="left:1869px;top:405.6px;width:5px;height:2px;background:#a88a48"></div><div class="abs" style="left:1869px;top:412.1px;width:5px;height:2px;background:#a88a48"></div><div class="abs" style="left:1869px;top:428.0px;width:5px;height:2px;background:#a88a48"></div><div class="abs" style="left:1869px;top:435.8px;width:5px;height:2px;background:#a88a48"></div><div class="abs" style="left:1869px;top:451.0px;width:5px;height:2px;background:#a88a48"></div><div class="abs" style="left:1869px;top:457.4px;width:5px;height:2px;background:#a88a48"></div><div class="abs" style="left:1869px;top:463.9px;width:5px;height:2px;background:#a88a48"></div><div class="abs" style="left:1869px;top:476.9px;width:5px;height:2px;background:#a88a48"></div><div class="abs" style="left:1869px;top:487.7px;width:5px;height:2px;background:#a88a48"></div><div class="abs" style="left:1869px;top:500.7px;width:5px;height:2px;background:#a88a48"></div><div class="abs" style="left:1869px;top:511.5px;width:5px;height:2px;background:#a88a48"></div><div class="abs" style="left:1869px;top:522.3px;width:5px;height:2px;background:#a88a48"></div><div class="abs" style="left:1869px;top:533.1px;width:5px;height:2px;background:#a88a48"></div><div class="abs" style="left:1869px;top:550.8px;width:5px;height:2px;background:#a88a48"></div><div class="abs" style="left:1869px;top:556.0px;width:5px;height:2px;background:#a88a48"></div><div class="abs" style="left:1869px;top:575.4px;width:5px;height:2px;background:#a88a48"></div><div class="abs" style="left:1869px;top:586.2px;width:5px;height:2px;background:#a88a48"></div><div class="abs" style="left:1869px;top:589.7px;width:5px;height:2px;background:#a88a48"></div><div class="abs" style="left:1869px;top:651.0px;width:5px;height:2px;background:#a88a48"></div><div class="abs" style="left:1869px;top:668.3px;width:5px;height:2px;background:#a88a48"></div><div class="abs" style="left:1869px;top:672.6px;width:5px;height:2px;background:#a88a48"></div><div class="abs" style="left:1869px;top:681.3px;width:5px;height:2px;background:#a88a48"></div><div class="abs" style="left:1869px;top:702.9px;width:5px;height:2px;background:#a88a48"></div><div class="abs" style="left:1869px;top:711.5px;width:5px;height:2px;background:#a88a48"></div><div class="abs" style="left:1869px;top:749.6px;width:5px;height:2px;background:#a88a48"></div><div class="abs" style="left:1869px;top:789.3px;width:5px;height:2px;background:#a88a48"></div><div class="abs" style="left:1869px;top:810.9px;width:5px;height:2px;background:#a88a48"></div><div class="abs" style="left:1869px;top:819.6px;width:5px;height:2px;background:#a88a48"></div><div class="abs" style="left:1869px;top:862.8px;width:5px;height:2px;background:#a88a48"></div><div class="abs" style="left:1869px;top:919.0px;width:5px;height:2px;background:#a88a48"></div>
<div class="abs" style="left:1521px;top:755px;width:44px;height:40px;border-radius:20px;background:radial-gradient(circle,rgba(255,255,255,0.22) 0,rgba(255,255,255,0.16) 60%,rgba(255,255,255,0) 72%)"></div>
<svg class="abs" style="left:1537px;top:778px" width="19" height="24" viewBox="0 0 19 24"><path d="M6.200 1.200q1.700 0 1.700 1.700v6.300l.6-1.300q2-.5 2.300 1.100 2-.4 2.400 1.200 2.300-.3 2.300 1.900v4.500q0 3-1.500 5.900h-8.200q-1.400-3.400-4.300-6.600-1-1.500 0-2.300 1.200-.8 2.400.5l.6.700v-11.900q0-1.700 1.700-1.700z" fill="#fff" stroke="#111" stroke-width="1.100"/><path d="M8.300 10.500v4M10.800 10.800v3.700M13.200 11.300v3.200" stroke="#111" stroke-width=".9"/></svg>
<div class="abs" id="ovl" style="left:0;top:0;width:1874px;height:958px;pointer-events:none;background:linear-gradient(to bottom,rgba(0,0,0,0) 588px,rgba(0,0,0,0.09) 717px,rgba(0,0,0,0.155) 848px,rgba(0,0,0,0.215) 958px)"></div>
</div>
</body></html>
